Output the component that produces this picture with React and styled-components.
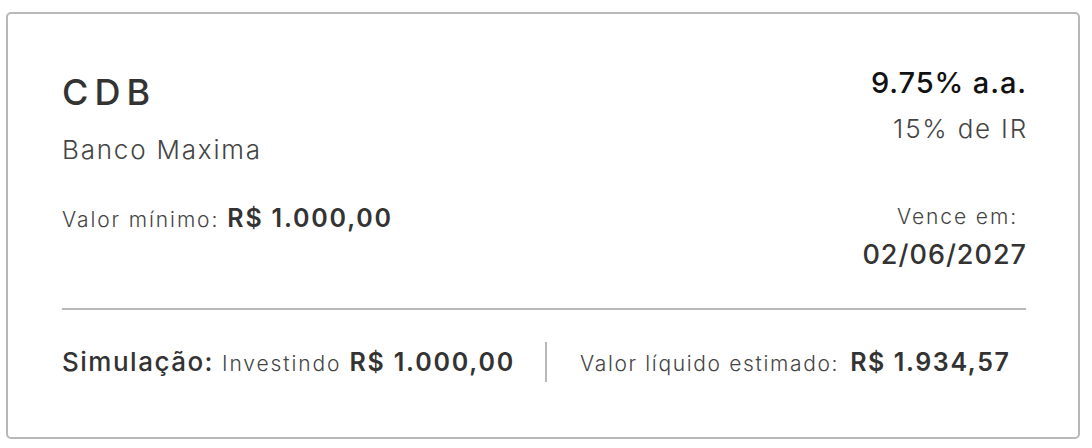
import React from "react";
import styled, { createGlobalStyle } from "styled-components";

const GlobalStyle = createGlobalStyle`
  body {
    margin: 0;
    background: #fff;
    font-family: "Inter", "Noto Sans", sans-serif;
    color: #333;
  }
`;

const Page = styled.div`
  padding: 12px 12px 0 6px;
`;

const Card = styled.div`
  box-sizing: border-box;
  width: 1074px;
  height: 427px;
  border: 2px solid #b8b8b8;
  border-radius: 5px;
  padding: 52px 52px 0 54px;
  display: flex;
  flex-direction: column;
`;

const Top = styled.div`
  display: flex;
  justify-content: space-between;
  height: 242px;
`;

const Column = styled.div`
  display: flex;
  flex-direction: column;
  align-items: ${({ right }) => (right ? "flex-end" : "flex-start")};
`;

const Title = styled.div`
  font-size: 36px;
  font-weight: 500;
  letter-spacing: 6px;
  color: #333;
  line-height: 40px;
  margin-top: 6px;
`;

const Subtitle = styled.div`
  font-size: 26px;
  font-weight: 300;
  color: #444;
  line-height: 30px;
  margin-top: ${({ gap }) => gap || 0}px;
  letter-spacing: 1.8px;
  margin-right: ${({ right }) => (right ? -2 : 0)}px;
`;

const Line = styled.div`
  display: flex;
  align-items: baseline;
  gap: 8px;
  margin-top: ${({ gap }) => gap || 0}px;
`;

const Label = styled.span`
  font-size: 21px;
  font-weight: 300;
  color: #444;
  letter-spacing: ${({ spacing }) => spacing ?? 1.9}px;
  line-height: 26px;
`;

const Value = styled.span`
  font-size: ${({ size }) => size || 25}px;
  font-weight: ${({ weight }) => weight || 600};
  color: #333;
  letter-spacing: ${({ spacing }) => spacing ?? 1.8}px;
  line-height: 30px;
`;

const Rate = styled.div`
  font-size: 29px;
  font-weight: 500;
  color: #111;
  line-height: 34px;
  letter-spacing: 0.9px;
  margin-right: -1px;
`;

const Due = styled.div`
  font-size: 21px;
  font-weight: 300;
  color: #444;
  line-height: 26px;
  margin-top: 60px;
  padding-right: 8px;
  letter-spacing: 1.9px;
`;

const Date = styled(Value)`
  margin-top: 10px;
  margin-right: -1px;
`;

const Divider = styled.hr`
  border: none;
  border-top: 2px solid #b8b8b8;
  margin: 0;
`;

const Bottom = styled.div`
  display: flex;
  align-items: center;
  height: 104px;
`;

const Group = styled.div`
  display: flex;
  align-items: baseline;
  gap: ${({ gap }) => gap || 8}px;
`;

const Separator = styled.div`
  width: 2px;
  height: 40px;
  background: #b8b8b8;
  margin: 0 33px 0 30px;
`;

export default function App() {
  return (
    <>
      <GlobalStyle />
      <Page>
        <Card>
          <Top>
            <Column>
              <Title>CDB</Title>
              <Subtitle gap={23}>Banco Maxima</Subtitle>
              <Line gap={38}>
                <Label>Valor mínimo:</Label>
                <Value>R$ 1.000,00</Value>
              </Line>
            </Column>
            <Column right>
              <Rate>9.75% a.a.</Rate>
              <Subtitle gap={14} right>15% de IR</Subtitle>
              <Due>Vence em:</Due>
              <Date size={27} weight={500} spacing={1}>
                02/06/2027
              </Date>
            </Column>
          </Top>
          <Divider />
          <Bottom>
            <Group>
              <Value size={26} weight={500} spacing={1.5}>Simulação:</Value>
              <Label>Investindo</Label>
              <Value>R$ 1.000,00</Value>
            </Group>
            <Separator />
            <Group gap={11}>
              <Label spacing={1.65}>Valor líquido estimado:</Label>
              <Value spacing={1.6}>R$ 1.934,57</Value>
            </Group>
          </Bottom>
        </Card>
      </Page>
    </>
  );
}
